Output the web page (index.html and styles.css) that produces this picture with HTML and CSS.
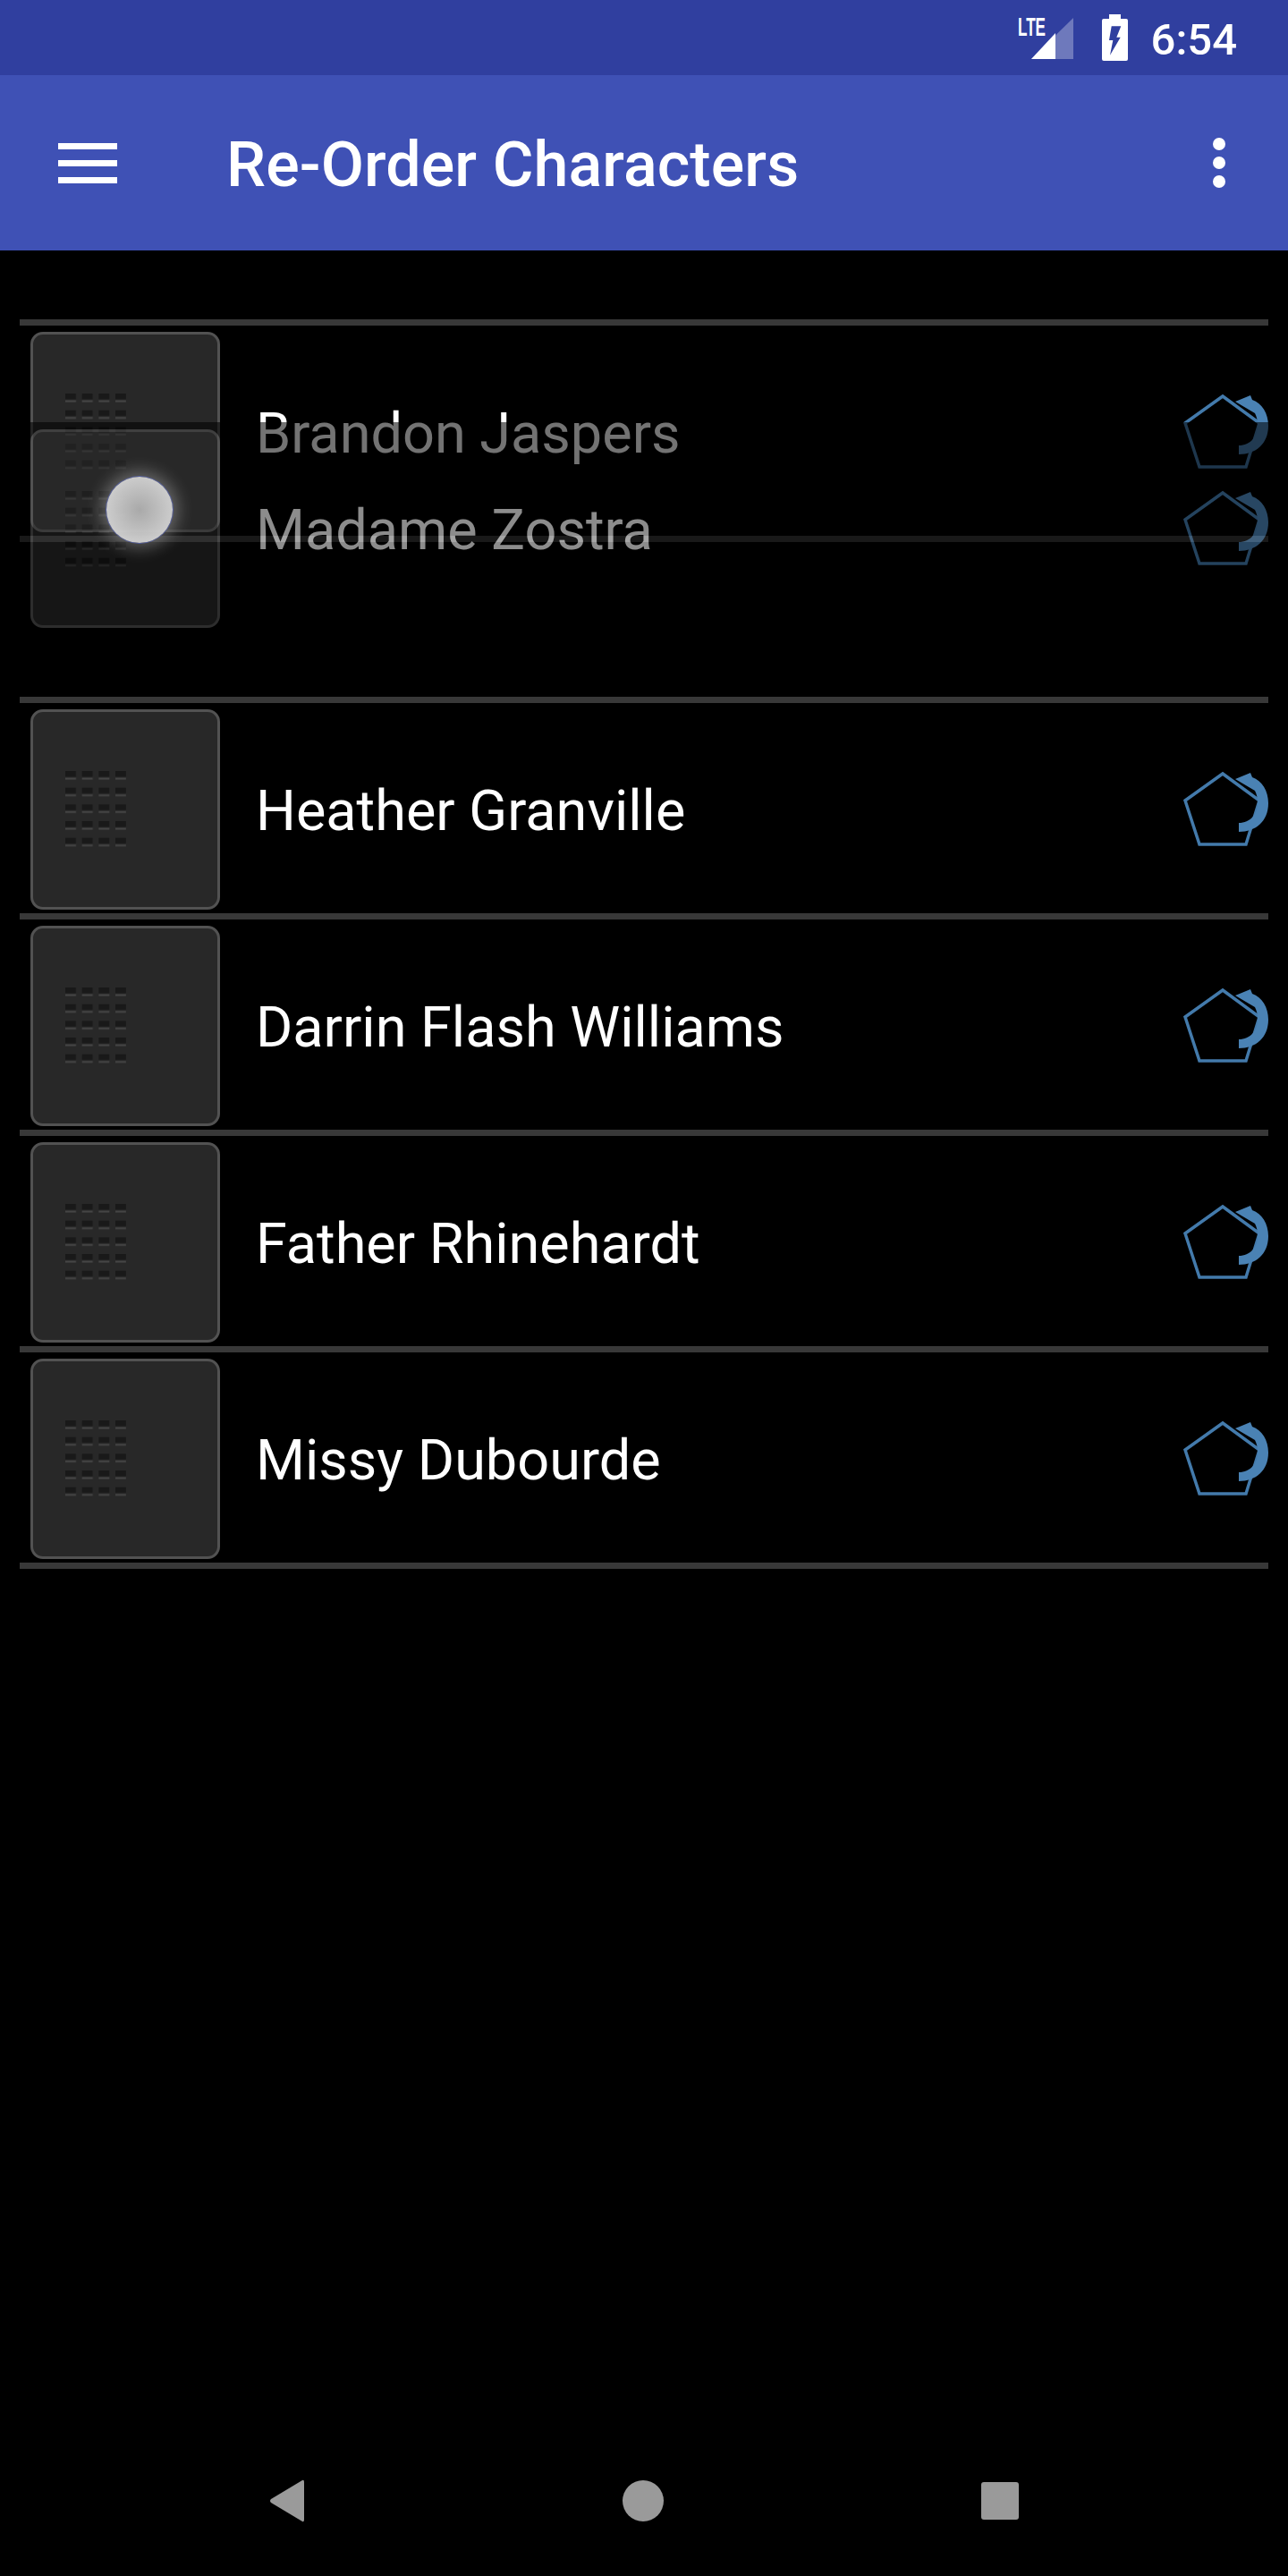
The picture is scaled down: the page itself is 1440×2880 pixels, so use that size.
FILE: index.html
```html
<!DOCTYPE html>
<html lang="en">
<head>
  <meta charset="UTF-8" />
  <meta name="viewport" content="width=device-width, initial-scale=1.0" />
  <title>Re-Order Characters</title>
  <link rel="stylesheet" href="styles.css">
</head>
<body>
  <!-- shared shapes for the rows -->
  <svg class="defs" aria-hidden="true">
    <defs>
      <pattern id="grip-dots" width="18.67" height="18.67" patternUnits="userSpaceOnUse">
        <rect width="12" height="6.5" fill="#191919" />
        <rect y="7.5" width="12" height="2" fill="#464646" />
      </pattern>
      <symbol id="grip" viewBox="0 0 68 86">
        <rect width="68" height="86" fill="url(#grip-dots)" />
      </symbol>
      <symbol id="redo" viewBox="0 0 98 90">
        <polygon points="47,5 5,35 21,84 73,84 88,35" fill="none" stroke="#437aab" stroke-width="3.5" />
        <path d="M61 11 L78 4 L80 9 C91 13 98 24 98 38 C98 58 84 70 65 70 V60 C78 60 86 50 86 38 C86 32 85 28 83 24 Z" fill="#4a82b4" />
      </symbol>
    </defs>
  </svg>

  <div class="status-bar">
    <svg class="signal" viewBox="0 0 64 56">
      <text x="1" y="26" textLength="31" lengthAdjust="spacingAndGlyphs" class="signal-text">LTE</text>
      <path d="M16 52 L63 6 V52 Z" fill="#fff" opacity="0.3" />
      <path d="M16 52 L43 23 V52 Z" fill="#fff" />
    </svg>
    <svg class="battery" viewBox="0 0 29 52">
      <path d="M8 0 H21 V5 H27 Q29 5 29 7 V50 Q29 52 27 52 H2 Q0 52 0 50 V7 Q0 5 2 5 H8 Z" fill="#fff" />
      <polygon points="10.7,13.3 21.3,13.3 16.3,25.7 20.7,25.7 9,45.7 12.3,29 8,29" fill="#303f9f" />
    </svg>
    <span class="clock">6:54</span>
  </div>

  <header class="app-bar">
    <div class="menu-icon"><span></span><span></span><span></span></div>
    <h1>Re-Order Characters</h1>
    <div class="more-icon"><span></span><span></span><span></span></div>
  </header>

  <main class="list">
    <div class="row row-lifted">
      <div class="thumb"><svg class="grip"><use href="#grip" /></svg></div>
      <span class="name">Brandon Jaspers</span>
      <svg class="redo"><use href="#redo" /></svg>
    </div>

    <div class="row">
      <div class="thumb"><svg class="grip"><use href="#grip" /></svg></div>
      <span class="name">Heather Granville</span>
      <svg class="redo"><use href="#redo" /></svg>
    </div>
    <div class="row">
      <div class="thumb"><svg class="grip"><use href="#grip" /></svg></div>
      <span class="name">Darrin Flash Williams</span>
      <svg class="redo"><use href="#redo" /></svg>
    </div>
    <div class="row">
      <div class="thumb"><svg class="grip"><use href="#grip" /></svg></div>
      <span class="name">Father Rhinehardt</span>
      <svg class="redo"><use href="#redo" /></svg>
    </div>
    <div class="row">
      <div class="thumb"><svg class="grip"><use href="#grip" /></svg></div>
      <span class="name">Missy Dubourde</span>
      <svg class="redo"><use href="#redo" /></svg>
    </div>

    <!-- row being dragged, floats over the list -->
    <div class="row-drag">
      <div class="thumb"><svg class="grip"><use href="#grip" /></svg></div>
      <span class="name">Madame Zostra</span>
      <svg class="redo"><use href="#redo" /></svg>
    </div>
    <div class="touch-dot"></div>
  </main>

  <nav class="nav-bar">
    <svg class="nav-back" viewBox="0 0 40 48">
      <path d="M37 1 Q39 0 39 3 V45 Q39 48 37 47 L2 26 Q0 24 2 22 Z" fill="#9a9a9a" />
    </svg>
    <div class="nav-home"></div>
    <div class="nav-recent"></div>
  </nav>
</body>
</html>
```

FILE: styles.css
```css
body {
  font-family: 'Roboto', sans-serif;
  background-color: #000000;
  color: #ffffff;
  margin: 0;
  padding: 0;
  height: 2880px;
  overflow: hidden;
  display: flex;
  flex-direction: column;
}
.defs {
  position: absolute;
  width: 0;
  height: 0;
}

/* status bar */
.status-bar {
  background-color: #303f9f;
  height: 84px;
  display: flex;
  align-items: center;
  justify-content: flex-end;
  padding-right: 57px;
}
.signal {
  width: 64px;
  height: 56px;
  margin-right: 31px;
}
.signal-text {
  font-family: 'Liberation Sans', sans-serif;
  font-weight: 700;
  font-size: 30px;
  fill: #ffffff;
}
.battery {
  width: 29px;
  height: 52px;
  margin-right: 26px;
}
.clock {
  font-size: 49px;
  font-weight: 500;
  padding-top: 4px;
}

/* app bar */
.app-bar {
  background-color: #3f51b5;
  height: 196px;
  display: flex;
  align-items: center;
  padding: 0 70px 0 65px;
}
.app-bar h1 {
  flex: 1;
  margin: 0 0 0 122px;
  padding-top: 3px;
  font-size: 70px;
  font-weight: 500;
  letter-spacing: 0.1px;
}
.menu-icon {
  width: 66px;
  display: flex;
  flex-direction: column;
  gap: 12px;
}
.menu-icon span {
  height: 7px;
  background-color: #ffffff;
}
.more-icon {
  display: flex;
  flex-direction: column;
  gap: 7px;
}
.more-icon span {
  width: 14px;
  height: 14px;
  border-radius: 50%;
  background-color: #ffffff;
}

/* list */
.list {
  flex: 1;
  position: relative;
  padding: 77px 22px 0;
}
.row {
  display: flex;
  align-items: center;
  padding: 7px 0 4px;
  border-top: 7px solid #383838;
}
.row:nth-last-child(3) {
  border-bottom: 7px solid #383838;
}
.row-lifted {
  border-bottom: 7px solid #383838;
  margin-bottom: 173px;
}
.thumb {
  box-sizing: border-box;
  width: 212px;
  height: 224px;
  margin-left: 12px;
  padding: 66px 0 0 36px;
  border: 3px solid #525252;
  border-radius: 14px;
  background-color: #282828;
}
.grip {
  display: block;
  width: 68px;
  height: 86px;
}
.name {
  flex: 1;
  margin-left: 40px;
  padding-top: 2px;
  font-size: 63px;
}
.redo {
  width: 98px;
  height: 90px;
  filter: blur(0.4px);
}

/* dragged row and the touch marker */
.row-drag {
  position: absolute;
  top: 192px;
  left: 22px;
  right: 22px;
  display: flex;
  align-items: center;
  padding: 8px 0 12px;
  background-color: #000000;
  opacity: 0.55;
}
.row-drag .thumb {
  height: 222px;
}
.touch-dot {
  position: absolute;
  top: 253px;
  left: 119px;
  width: 74px;
  height: 74px;
  border-radius: 50%;
  background: radial-gradient(circle, rgba(176, 176, 176, 0.95), rgba(228, 228, 228, 0.95));
  box-shadow: 0 0 0 1px rgba(84, 96, 176, 0.8), 0 0 18px 6px rgba(255, 255, 255, 0.3);
}

/* nav bar */
.nav-bar {
  height: 168px;
  position: relative;
  display: flex;
  align-items: center;
}
.nav-back {
  width: 40px;
  height: 48px;
  margin-left: 301px;
}
.nav-home {
  width: 46px;
  height: 46px;
  margin-left: 355px;
  border-radius: 50%;
  background-color: #9a9a9a;
}
.nav-recent {
  width: 42px;
  height: 42px;
  margin-left: 355px;
  border-radius: 3px;
  background-color: #9a9a9a;
}
```
